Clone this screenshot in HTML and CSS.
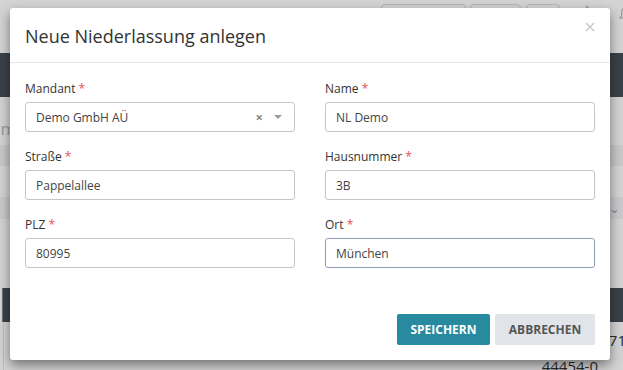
FILE: index.html
```html
<!DOCTYPE html>
<html lang="de">
<head>
<meta charset="utf-8">
<title>Neue Niederlassung anlegen</title>
<link rel="stylesheet" href="styles.css">
</head>
<body>
<div class="page">
  <div class="topbar">
    <span class="tb-btn w1"></span>
    <span class="tb-btn w2"></span>
    <span class="tb-btn w3"></span>
    <svg class="tb-icon" width="6" height="16" viewBox="0 0 6 16"><circle cx="3" cy="2" r="1.3" fill="#9a9a9a"/><circle cx="3" cy="7" r="1.3" fill="#9a9a9a"/><circle cx="3" cy="12" r="1.3" fill="#9a9a9a"/></svg>
    <svg class="bell" width="14" height="18" viewBox="0 0 14 18"><path d="M7 1.5c-2.6 0-4.3 2-4.3 4.6v3.6L1 12h12l-1.7-2.3V6.1C11.3 3.5 9.6 1.5 7 1.5z" fill="none" stroke="#9a9a9a" stroke-width="1.2"/></svg>
  </div>
  <div class="nav"></div>
  <div class="content">
    <div class="crumb">Stamm</div>
    <div class="band"></div>
    <div class="filter"><span class="chev">⌄</span></div>
    <div class="thead"></div>
    <div class="row r1"><span class="cell-r">71</span></div>
    <div class="row r2"><span class="cell-r">44454-0</span></div>
  </div>
</div>

<div class="modal">
  <div class="modal-header">
    <h4 class="modal-title">Neue Niederlassung anlegen</h4>
    <svg class="close" width="10" height="10" viewBox="0 0 10 10"><path d="M1 1L9 9M9 1L1 9" stroke="#c4c4c4" stroke-width="1.2" fill="none"/></svg>
  </div>
  <div class="modal-body">
    <div class="field">
      <label class="label">Mandant <span class="req">*</span></label>
      <div class="input select">
        <span class="value">Demo GmbH AÜ</span>
        <span class="clear">×</span>
        <span class="caret"></span>
      </div>
    </div>
    <div class="field">
      <label class="label">Name <span class="req">*</span></label>
      <div class="input">NL Demo</div>
    </div>
    <div class="field">
      <label class="label">Straße <span class="req">*</span></label>
      <div class="input">Pappelallee</div>
    </div>
    <div class="field">
      <label class="label">Hausnummer <span class="req">*</span></label>
      <div class="input">3B</div>
    </div>
    <div class="field">
      <label class="label">PLZ <span class="req">*</span></label>
      <div class="input">80995</div>
    </div>
    <div class="field">
      <label class="label">Ort <span class="req">*</span></label>
      <div class="input focus">München</div>
    </div>
  </div>
  <div class="modal-footer">
    <button class="btn primary">SPEICHERN</button>
    <button class="btn secondary">ABBRECHEN</button>
  </div>
</div>
</body>
</html>
```
FILE: styles.css
```css
html, body {
  margin: 0;
  padding: 0;
}
body {
  width: 623px;
  height: 370px;
  overflow: hidden;
  font-family: "Open Sans", "Noto Sans", sans-serif;
  background: #d3d3d3;
  position: relative;
}
.page {
  display: flex;
  flex-direction: column;
}
.topbar {
  height: 53px;
  display: flex;
  align-items: flex-start;
  justify-content: flex-end;
  padding-top: 4px;
  box-sizing: border-box;
  margin-right: -10px;
}
.tb-btn {
  height: 24px;
  border: 1px solid #b5b5b5;
  border-radius: 4px;
  box-sizing: border-box;
}
.tb-btn.w1 { width: 85px; }
.tb-btn.w2 { width: 51px; margin-left: 4px; }
.tb-btn.w3 { width: 34px; margin-left: 5px; }
.tb-icon { margin-left: 24px; margin-top: 1px; }
.bell { margin-left: 29px; margin-top: 2px; }
.nav {
  height: 44px;
  background: #3b4149;
}
.content {
  display: flex;
  flex-direction: column;
}
.crumb {
  height: 48px;
  color: #9a9a9a;
  font-size: 17px;
  line-height: 64px;
  margin-left: -40px;
  white-space: nowrap;
}
.band {
  height: 21px;
  background: #c8c8ca;
}
.filter {
  height: 22px;
  margin-top: 31px;
  background: #c9c9cc;
  display: flex;
  justify-content: flex-end;
  align-items: center;
}
.chev {
  color: #8a8a8a;
  font-size: 13px;
  margin-right: 3px;
  line-height: 10px;
}
.thead {
  height: 34px;
  margin-top: 69px;
  background: #3b4149;
  border-left: 1px solid #6a6f76;
  margin-left: 2px;
}
.row {
  display: flex;
  justify-content: flex-end;
  align-items: center;
  font-size: 15px;
  color: #2a2a2a;
  border-left: 1px solid #c0c0c0;
  margin-left: 3px;
  white-space: nowrap;
}
.row.r1 { height: 36px; }
.row.r2 { height: 16px; }
.r1 .cell-r { margin-right: -3px; }
.r2 .cell-r { margin-right: 25px; }

.modal {
  position: absolute;
  left: 10px;
  top: 8px;
  width: 600px;
  height: 352px;
  background: #fff;
  border-radius: 3px;
  box-shadow: 0 5px 12px rgba(0, 0, 0, 0.45);
  display: flex;
  flex-direction: column;
  box-sizing: border-box;
}
.modal-header {
  height: 55px;
  border-bottom: 1px solid #e5e5e5;
  display: flex;
  align-items: center;
  justify-content: space-between;
  padding: 0 15px;
  box-sizing: border-box;
}
.modal-title {
  margin: 0;
  font-weight: 400;
  font-size: 18px;
  color: #333;
  padding-top: 2px;
}
.close {
  margin-top: -16px;
  margin-right: 0;
}
.modal-body {
  display: grid;
  grid-template-columns: 270px 270px;
  column-gap: 30px;
  row-gap: 16px;
  padding: 17px 15px 0 15px;
}
.field {
  display: flex;
  flex-direction: column;
}
.label {
  font-size: 12px;
  line-height: 18px;
  color: #333;
  margin-bottom: 4px;
}
.req { color: #e8504f; }
.input {
  height: 30px;
  box-sizing: border-box;
  border: 1px solid #c6c6c6;
  border-radius: 3px;
  padding: 0 10px;
  font-size: 12px;
  color: #444;
  display: flex;
  align-items: center;
}
.input.focus { border-color: #8f9bb8; }
.select .value { flex: 1; }
.clear {
  color: #888;
  font-size: 13px;
  font-weight: 700;
  margin-right: 11px;
}
.caret {
  width: 0;
  height: 0;
  border-left: 4px solid transparent;
  border-right: 4px solid transparent;
  border-top: 4px solid #999;
  margin-right: 2px;
}
.modal-footer {
  margin-top: auto;
  display: flex;
  justify-content: flex-end;
  gap: 5px;
  padding: 0 15px 15px 0;
}
.btn {
  height: 31px;
  border: none;
  border-radius: 2px;
  font-family: "Open Sans", "Noto Sans", sans-serif;
  font-size: 12px;
  font-weight: 700;
  padding: 0;
}
.btn.primary {
  width: 93px;
  background: #278a9e;
  color: #fff;
}
.btn.secondary {
  width: 100px;
  background: #e1e5ea;
  color: #555;
}
```
